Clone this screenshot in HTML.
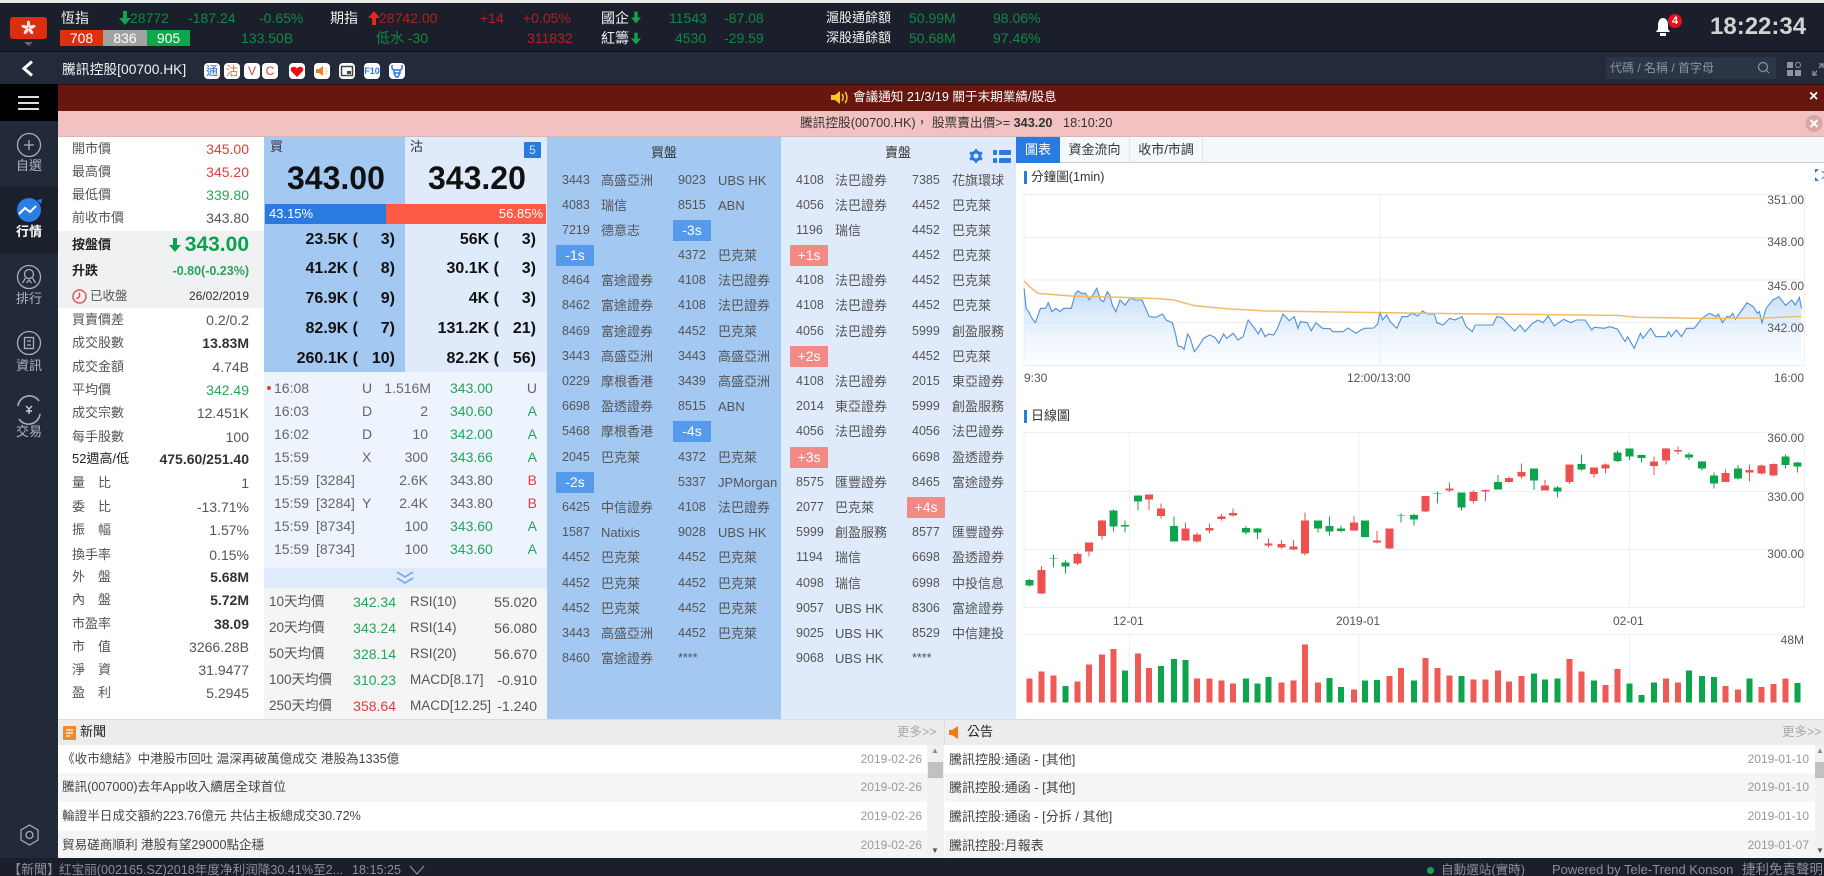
<!DOCTYPE html>
<html lang="zh-Hant"><head><meta charset="utf-8"><title>騰訊控股</title>
<style>
*{box-sizing:border-box;margin:0;padding:0}
html,body{width:1824px;height:876px;overflow:hidden;background:#fff}
body{position:relative;font-family:"Liberation Sans","Noto Sans CJK TC",sans-serif;font-size:13px;color:#555}
.b{position:absolute}
.t{position:absolute;white-space:nowrap;line-height:20px;height:20px}
.g{color:#0e8a43}.r{color:#b02020}.w{color:#f2f2f2}
.n{font-size:14px}
svg{position:absolute;overflow:visible}
.lr{position:absolute;left:58px;width:206px;height:22px;line-height:22px;padding:0 15px 0 14px;display:flex;justify-content:space-between;font-size:13px;color:#555;white-space:nowrap}
.lr b{font-weight:400;font-size:14px}
.lr .gn{color:#27a35c}.lr .rd{color:#e23c3c}
.lr .k{color:#222;font-weight:700}
.lr .s{color:#333;font-weight:700;font-size:14px}
.ic{position:absolute;top:63px;width:16px;height:16px;background:#fff;border-radius:4px;text-align:center;font-size:12px;line-height:16px;overflow:hidden}
.qr{position:absolute;height:20px;line-height:20px;font-weight:700;font-size:16px;color:#111;white-space:nowrap}
.tr{position:absolute;left:264px;width:283px;height:20px;line-height:20px;font-size:14px;color:#666;white-space:nowrap}
.tr i{position:absolute;font-style:normal}
.s1{left:10px}.s2{left:52px}.s3{left:98px}.s4{right:119px}.s5{left:186px;color:#27a35c}.s5.x{color:#666}.s6{right:10px;color:#27a35c}.s6.rd{color:#e23c3c}
.ma{position:absolute;left:264px;width:283px;height:20px;line-height:20px;font-size:13.5px;color:#555;white-space:nowrap}
.ma i{position:absolute;font-style:normal}
.bk{position:absolute;top:167.5px;width:234px;height:510px;font-size:12.5px;color:#555}
.br{position:relative;height:25.2px;line-height:25.2px;white-space:nowrap}
.br i{position:absolute;font-style:normal}
.c1{left:15px}.n1{left:54px;font-size:13px}.c2{left:131px}.n2{left:171px;font-size:13px}
.br em{position:absolute;font-style:normal;top:2px;height:21px;width:38px;line-height:20px;text-align:center;color:#fff;font-size:14px}
.eb{background:#569beb}.es{background:#f28a85}
.e1{left:9px}.e2{left:126px}
.tb{position:absolute;top:137px;height:26px;line-height:25px;text-align:center;font-size:13px;color:#333;border-right:1px solid #e2e5e9}
.lb{position:absolute;font-size:12px;color:#555;line-height:14px;height:14px;white-space:nowrap}
.nr{position:absolute;height:29px;line-height:29px;font-size:13px;color:#444;white-space:nowrap;overflow:hidden;padding-left:4px}
.nr.m{font-size:12.6px}
.nr span{position:absolute;top:0;font-size:12px;color:#999}
.sl{position:absolute;height:20px;line-height:20px;font-size:13px;color:#aeb4bf;text-align:center;width:58px;left:0}
</style></head><body>

<!-- top bar -->
<div class="b" style="left:0;top:0;width:1824px;height:3px;background:#e9e9e9"></div>
<div class="b" style="left:0;top:3px;width:1824px;height:49px;background:#1a1f2b;border-bottom:1px solid #0e1118"></div>
<div class="b" style="left:10px;top:17px;width:37px;height:22px;background:#d8300f;border-radius:3px"></div>
<svg style="left:10px;top:17px" width="37" height="32" viewBox="0 0 37 32"><g fill="#f5e9e4"><ellipse cx="18.5" cy="7" rx="1.7" ry="3.4"/><ellipse cx="18.5" cy="7" rx="1.7" ry="3.4" transform="rotate(72 18.5 11)"/><ellipse cx="18.5" cy="7" rx="1.7" ry="3.4" transform="rotate(144 18.5 11)"/><ellipse cx="18.5" cy="7" rx="1.7" ry="3.4" transform="rotate(216 18.5 11)"/><ellipse cx="18.5" cy="7" rx="1.7" ry="3.4" transform="rotate(288 18.5 11)"/></g><path d="M14 25h9l-4.500 4z" fill="#667"/></svg>

<div class="t w" style="left:61px;top:8px;font-size:14px">恆指</div>
<svg style="left:119px;top:11px" width="12" height="14" viewBox="0 0 12 14"><path d="M4 0h4v7h4l-6 7-6-7h4z" fill="#10a54a"/></svg>
<div class="t g n" style="left:130px;top:8px">28772</div>
<div class="t g n" style="left:188px;top:8px">-187.24</div>
<div class="t g n" style="left:259px;top:8px">-0.65%</div>
<div class="t w" style="left:330px;top:8px;font-size:14px">期指</div>
<svg style="left:368px;top:11px" width="12" height="14" viewBox="0 0 12 14"><path d="M4 14h4V7h4L6 0 0 7h4z" fill="#e5281e"/></svg>
<div class="t r n" style="left:379px;top:8px">28742.00</div>
<div class="t r n" style="left:480px;top:8px">+14</div>
<div class="t r n" style="left:523px;top:8px">+0.05%</div>
<div class="b" style="left:60px;top:30px;width:43px;height:16px;background:#df300e;color:#fff;font-size:14px;line-height:16px;text-align:center">708</div>
<div class="b" style="left:103px;top:30px;width:44px;height:16px;background:#a2a2a2;color:#fff;font-size:14px;line-height:16px;text-align:center">836</div>
<div class="b" style="left:147px;top:30px;width:43px;height:16px;background:#0ba84a;color:#fff;font-size:14px;line-height:16px;text-align:center">905</div>
<div class="t g n" style="left:241px;top:28px">133.50B</div>
<div class="t g n" style="left:376px;top:28px">低水 -30</div>
<div class="t r n" style="left:527px;top:28px">311832</div>
<div class="t w" style="left:601px;top:8px;font-size:14px">國企</div>
<div class="t w" style="left:601px;top:28px;font-size:14px">紅籌</div>
<svg style="left:631px;top:11px" width="10" height="13" viewBox="0 0 12 14"><path d="M4 0h4v7h4l-6 7-6-7h4z" fill="#10a54a"/></svg>
<svg style="left:631px;top:32px" width="10" height="13" viewBox="0 0 12 14"><path d="M4 0h4v7h4l-6 7-6-7h4z" fill="#10a54a"/></svg>
<div class="t g n" style="left:669px;top:8px">11543</div>
<div class="t g n" style="left:675px;top:28px">4530</div>
<div class="t g n" style="left:724px;top:8px">-87.08</div>
<div class="t g n" style="left:724px;top:28px">-29.59</div>
<div class="t w" style="left:826px;top:8px">滬股通餘額</div>
<div class="t w" style="left:826px;top:28px">深股通餘額</div>
<div class="t g n" style="left:909px;top:8px">50.99M</div>
<div class="t g n" style="left:909px;top:28px">50.68M</div>
<div class="t g n" style="left:993px;top:8px">98.06%</div>
<div class="t g n" style="left:993px;top:28px">97.46%</div>
<svg style="left:1654px;top:16px" width="20" height="22" viewBox="0 0 20 22"><path d="M9 2c-3 0-5 3-5 7v4l-2 3h14l-2-3V9c0-4-2-7-5-7z" fill="#fff"/><rect x="6" y="17" width="6" height="3" fill="#fff"/></svg>
<div class="b" style="left:1668px;top:14px;width:14px;height:14px;border-radius:50%;background:#e5101a;color:#fff;font-weight:700;font-size:11px;line-height:14px;text-align:center">4</div>
<div class="b" style="left:1710px;top:12px;width:104px;height:30px;line-height:30px;font-size:24px;font-weight:700;color:#d2d2d2;white-space:nowrap">18:22:34</div>

<!-- nav bar -->
<div class="b" style="left:0;top:52px;width:1824px;height:32px;background:#232b3a"></div>
<svg style="left:20px;top:60px" width="16" height="17" viewBox="0 0 16 17"><path d="M12 1.500 4 8.500l8 7" fill="none" stroke="#fff" stroke-width="3"/></svg>
<div class="t w" style="left:62px;top:60px;font-size:13.8px">騰訊控股[00700.HK]</div>
<div class="ic" style="left:204px;color:#2a7ae0">通</div>
<div class="ic" style="left:224px;color:#f0702a">沽</div>
<div class="ic" style="left:244px;color:#e23c3c">V</div>
<div class="ic" style="left:262px;color:#e23c3c">C</div>
<div class="ic" style="left:289px"></div>
<svg style="left:289px;top:63px" width="16" height="16" viewBox="0 0 16 16"><path d="M8 14 2.500 8.500C1 7 1.500 4 4.500 3.800 6 3.700 7.200 4.500 8 5.500 8.800 4.500 10 3.700 11.500 3.800 14.500 4 15 7 13.500 8.500z" fill="#e8101c"/></svg>
<div class="ic" style="left:314px"></div>
<svg style="left:314px;top:63px" width="16" height="16" viewBox="0 0 16 16"><path d="M2 6h3l4-3v10l-4-3H2z" fill="#f0802a"/><path d="M11 5l2 1M11 8h3M11 11l2-1" stroke="#f0c08a" stroke-width="1"/></svg>
<div class="ic" style="left:339px"></div>
<svg style="left:339px;top:63px" width="16" height="16" viewBox="0 0 16 16"><rect x="2.500" y="3.500" width="11" height="9" fill="none" stroke="#444" stroke-width="1.500"/><rect x="8" y="8" width="4" height="3" fill="#444"/></svg>
<div class="ic" style="left:364px;color:#2a7ae0;font-size:9px;font-weight:700">F10</div>
<div class="ic" style="left:389px"></div>
<svg style="left:389px;top:63px" width="16" height="16" viewBox="0 0 16 16"><path d="M3 2v3c0 1 1 2 2 2h6c1 0 2-1 2-2V2M5 7v3l2 4h2l2-4V7M5 10h6" fill="none" stroke="#2a7ae0" stroke-width="1.500"/></svg>
<div class="b" style="left:1606px;top:57px;width:170px;height:22px;background:#2c3545"></div>
<div class="t" style="left:1610px;top:58px;font-size:12px;color:#8a93a3">代碼 / 名稱 / 首字母</div>
<svg style="left:1757px;top:61px" width="14" height="14" viewBox="0 0 14 14"><circle cx="6" cy="6" r="4.500" fill="none" stroke="#8a93a3" stroke-width="1.200"/><path d="M9.500 9.500 12 12" stroke="#8a93a3" stroke-width="1.200"/></svg>
<svg style="left:1787px;top:62px" width="14" height="14" viewBox="0 0 14 14"><g fill="#8f96a3"><rect width="6" height="6"/><rect y="8" width="6" height="6"/><rect x="8" y="8" width="6" height="6"/><circle cx="11" cy="3" r="2.500" fill="none" stroke="#8f96a3"/></g></svg>
<svg style="left:1812px;top:63px" width="12" height="13" viewBox="0 0 12 13"><path d="M1 12l4-4M1 8v4h4M11 1 7 5M7 1h4v4" fill="none" stroke="#8f96a3" stroke-width="1.300"/></svg>

<!-- alert bars -->
<div class="b" style="left:58px;top:84px;width:1766px;height:27px;background:#671710;border-top:1px solid #3f0e0a"></div>
<svg style="left:830px;top:90px" width="20" height="15" viewBox="0 0 20 15"><path d="M1 5h4l5-4v13l-5-4H1z" fill="#f6c824"/><path d="M12 4c1.500 2 1.500 5 0 7M15 2c2.500 3 2.500 8 0 11" fill="none" stroke="#f6c824" stroke-width="1.500"/></svg>
<div class="t" style="left:853px;top:87px;font-size:12.6px;color:#fff">會議通知 21/3/19 關于末期業績/股息</div>
<div class="t" style="left:1809px;top:87px;font-size:16px;color:#fff;font-weight:700">×</div>
<div class="b" style="left:58px;top:111px;width:1766px;height:26px;background:#f2c2c2;border-bottom:1px solid #d5b8b8"></div>
<div class="t" style="left:800px;top:113px;font-size:12.7px;color:#333">騰訊控股(00700.HK)， 股票賣出價&gt;= <b>343.20</b>&nbsp;&nbsp;&nbsp;18:10:20</div>
<svg style="left:1805px;top:114px" width="19" height="19" viewBox="0 0 19 19"><circle cx="9" cy="9.500" r="8.500" fill="#d9a5a7"/><path d="M5.500 6 12.500 13M12.500 6 5.500 13" stroke="#fff" stroke-width="2"/></svg>

<!-- sidebar -->
<div class="b" style="left:0;top:84px;width:58px;height:774px;background:#222a3a"></div>
<div class="b" style="left:0;top:84px;width:58px;height:37px;background:#000"></div>
<div class="b" style="left:18px;top:96px;width:21px;height:2px;background:#ddd"></div>
<div class="b" style="left:18px;top:102px;width:21px;height:2px;background:#ddd"></div>
<div class="b" style="left:18px;top:108px;width:21px;height:2px;background:#ddd"></div>
<div class="b" style="left:0;top:187px;width:58px;height:66px;background:#1a202c"></div>
<svg style="left:0;top:130px" width="58" height="720" viewBox="0 0 58 720">
<g fill="none" stroke="#a9afba" stroke-width="1.300">
<circle cx="29" cy="15" r="11.500"/><path d="M29 10v10M24 15h10"/>
<circle cx="29" cy="147" r="11.500"/><circle cx="29" cy="144" r="4.500"/><path d="M25.500 148l-3 5M32.500 148l3 5M26.500 153l2.500-3 2.500 3"/>
<circle cx="29" cy="213" r="11.500"/><rect x="24.500" y="207.500" width="9" height="11"/><path d="M27 211h4M27 215h4"/>
<path d="M18 276a11.500 11.500 0 0 1 21-5M40 284a11.500 11.500 0 0 1-21 5" stroke-width="1.600"/><path d="M26 276l3 3 3-3M29 279v5M26 281h6" stroke="#ccd" stroke-width="1.400"/>
<path d="M29.500 695l8.500 5v10l-8.500 5-8.500-5v-10z" stroke-width="1.200"/><circle cx="29.500" cy="705" r="3.500"/>
</g>
<circle cx="29" cy="80" r="12" fill="#2a7de1"/><path d="M19 84l6-6 5 4 6-6" fill="none" stroke="#fff" stroke-width="2"/><path d="M37 70l5-1-1 5z" fill="#2a7de1"/>
</svg>
<div class="sl" style="top:156px">自選</div>
<div class="sl" style="top:222px;color:#fff;font-weight:700">行情</div>
<div class="sl" style="top:289px">排行</div>
<div class="sl" style="top:356px">資訊</div>
<div class="sl" style="top:422px">交易</div>

<!-- left stats -->
<div class="b" style="left:58px;top:137px;width:206px;height:582px;background:#fff"></div>
<div class="b" style="left:58px;top:231px;width:206px;height:77px;background:#f0f1f3"></div>
<div class="lr" style="top:138px"><span>開市價</span><b class="rd">345.00</b></div>
<div class="lr" style="top:161px"><span>最高價</span><b class="rd">345.20</b></div>
<div class="lr" style="top:184px"><span>最低價</span><b class="gn">339.80</b></div>
<div class="lr" style="top:207px"><span>前收市價</span><b>343.80</b></div>
<div class="lr" style="top:234px;line-height:22px"><span class="k">按盤價</span><b style="font-size:21px;font-weight:700;color:#0ca24d;padding-left:17px;position:relative"><svg style="left:0;top:4px" width="14" height="14" viewBox="0 0 12 14"><path d="M4 0h4v7h4l-6 7-6-7h4z" fill="#0ca24d"/></svg>343.00</b></div>
<div class="lr" style="top:260px"><span class="k">升跌</span><b style="font-size:12.500px;font-weight:700;color:#27a35c">-0.80(-0.23%)</b></div>
<svg style="left:72px;top:289px" width="15" height="15" viewBox="0 0 15 15"><circle cx="7.500" cy="7.500" r="6.500" fill="none" stroke="#e8505b" stroke-width="1.500"/><path d="M7.500 3.500v4L4.500 10" fill="none" stroke="#e8505b" stroke-width="1.500"/></svg>
<div class="lr" style="top:285px"><span style="padding-left:18px;font-size:12.500px">已收盤</span><b style="font-size:12px;color:#333">26/02/2019</b></div>
<div class="lr" style="top:309px"><span>買賣價差</span><b>0.2/0.2</b></div>
<div class="lr" style="top:332px"><span>成交股數</span><b class="s">13.83M</b></div>
<div class="lr" style="top:356px"><span>成交金額</span><b>4.74B</b></div>
<div class="lr" style="top:379px"><span>平均價</span><b class="gn">342.49</b></div>
<div class="lr" style="top:402px"><span>成交宗數</span><b>12.451K</b></div>
<div class="lr" style="top:426px"><span>每手股數</span><b>100</b></div>
<div class="lr" style="top:448px"><span style="color:#222">52週高/低</span><b class="s">475.60/251.40</b></div>
<div class="lr" style="top:472px"><span>量&emsp;比</span><b>1</b></div>
<div class="lr" style="top:496px"><span>委&emsp;比</span><b>-13.71%</b></div>
<div class="lr" style="top:519px"><span>振&emsp;幅</span><b>1.57%</b></div>
<div class="lr" style="top:544px"><span>換手率</span><b>0.15%</b></div>
<div class="lr" style="top:566px"><span>外&emsp;盤</span><b class="s">5.68M</b></div>
<div class="lr" style="top:589px"><span>內&emsp;盤</span><b class="s">5.72M</b></div>
<div class="lr" style="top:613px"><span>市盈率</span><b class="s">38.09</b></div>
<div class="lr" style="top:636px"><span>市&emsp;值</span><b>3266.28B</b></div>
<div class="lr" style="top:659px"><span>淨&emsp;資</span><b>31.9477</b></div>
<div class="lr" style="top:682px"><span>盈&emsp;利</span><b>5.2945</b></div>

<!-- quote panel -->
<div class="b" style="left:264px;top:137px;width:141px;height:235px;background:#a3c8f2"></div>
<div class="b" style="left:405px;top:137px;width:142px;height:235px;background:#dfeafa"></div>
<div class="t" style="left:270px;top:137px;color:#333">買</div>
<div class="t" style="left:410px;top:137px;color:#333">沽</div>
<div class="b" style="left:524px;top:142px;width:17px;height:16px;background:#2a7ae0;color:#cfe2fa;font-size:12px;line-height:16px;text-align:center;border-radius:1px">5</div>
<div class="t" style="left:287px;top:163px;height:30px;line-height:30px;font-size:32px;font-weight:700;color:#111">343.00</div>
<div class="t" style="left:428px;top:163px;height:30px;line-height:30px;font-size:32px;font-weight:700;color:#111">343.20</div>
<div class="b" style="left:265px;top:204px;width:121px;height:20px;background:#2a7be0;color:#fff;font-size:13px;line-height:20px;padding-left:4px">43.15%</div>
<div class="b" style="left:386px;top:204px;width:160px;height:20px;background:#fe5a45;color:#fff;font-size:13px;line-height:20px;padding-right:3px;text-align:right">56.85%</div>
<div class="qr" style="right:1466px;top:230px">23.5K (</div><div class="qr" style="right:1429px;top:230px">3)</div>
<div class="qr" style="right:1466px;top:259px">41.2K (</div><div class="qr" style="right:1429px;top:259px">8)</div>
<div class="qr" style="right:1466px;top:289px">76.9K (</div><div class="qr" style="right:1429px;top:289px">9)</div>
<div class="qr" style="right:1466px;top:319px">82.9K (</div><div class="qr" style="right:1429px;top:319px">7)</div>
<div class="qr" style="right:1466px;top:349px">260.1K (</div><div class="qr" style="right:1429px;top:349px">10)</div>
<div class="qr" style="right:1325px;top:230px">56K (</div><div class="qr" style="right:1288px;top:230px">3)</div>
<div class="qr" style="right:1325px;top:259px">30.1K (</div><div class="qr" style="right:1288px;top:259px">3)</div>
<div class="qr" style="right:1325px;top:289px">4K (</div><div class="qr" style="right:1288px;top:289px">3)</div>
<div class="qr" style="right:1325px;top:319px">131.2K (</div><div class="qr" style="right:1288px;top:319px">21)</div>
<div class="qr" style="right:1325px;top:349px">82.2K (</div><div class="qr" style="right:1288px;top:349px">56)</div>

<!-- trades -->
<div class="b" style="left:264px;top:372px;width:283px;height:196px;background:#edf4fd"></div>
<div class="b" style="left:264px;top:568px;width:283px;height:20px;background:#e0ecfb"></div>
<div class="b" style="left:267px;top:386px;width:4px;height:4px;border-radius:50%;background:#e23c3c"></div>
<div class="tr" style="top:378px"><i class="s1">16:08</i><i class="s3">U</i><i class="s4" style="right:116px">1.516M</i><i class="s5">343.00</i><i class="s6" style="color:#666">U</i></div>
<div class="tr" style="top:401px"><i class="s1">16:03</i><i class="s3">D</i><i class="s4">2</i><i class="s5">340.60</i><i class="s6">A</i></div>
<div class="tr" style="top:424px"><i class="s1">16:02</i><i class="s3">D</i><i class="s4">10</i><i class="s5">342.00</i><i class="s6">A</i></div>
<div class="tr" style="top:447px"><i class="s1">15:59</i><i class="s3">X</i><i class="s4">300</i><i class="s5">343.66</i><i class="s6">A</i></div>
<div class="tr" style="top:470px"><i class="s1">15:59</i><i class="s2">[3284]</i><i class="s4">2.6K</i><i class="s5 x">343.80</i><i class="s6 rd">B</i></div>
<div class="tr" style="top:493px"><i class="s1">15:59</i><i class="s2">[3284]</i><i class="s3">Y</i><i class="s4">2.4K</i><i class="s5 x">343.80</i><i class="s6 rd">B</i></div>
<div class="tr" style="top:516px"><i class="s1">15:59</i><i class="s2">[8734]</i><i class="s4">100</i><i class="s5">343.60</i><i class="s6">A</i></div>
<div class="tr" style="top:539px"><i class="s1">15:59</i><i class="s2">[8734]</i><i class="s4">100</i><i class="s5">343.60</i><i class="s6">A</i></div>
<svg style="left:396px;top:571px" width="18" height="14" viewBox="0 0 18 14"><path d="M1 1l8 5 8-5M1 7l8 5 8-5" fill="none" stroke="#7aa9ee" stroke-width="1.800"/></svg>

<!-- MA -->
<div class="b" style="left:264px;top:588px;width:283px;height:131px;background:#f5f5f5"></div>
<div class="ma" style="top:592px"><i style="left:5px">10天均價</i><i style="right:151px;color:#27a35c;font-size:14px">342.34</i><i style="left:146px">RSI(10)</i><i style="right:10px;font-size:14px">55.020</i></div>
<div class="ma" style="top:618px"><i style="left:5px">20天均價</i><i style="right:151px;color:#27a35c;font-size:14px">343.24</i><i style="left:146px">RSI(14)</i><i style="right:10px;font-size:14px">56.080</i></div>
<div class="ma" style="top:644px"><i style="left:5px">50天均價</i><i style="right:151px;color:#27a35c;font-size:14px">328.14</i><i style="left:146px">RSI(20)</i><i style="right:10px;font-size:14px">56.670</i></div>
<div class="ma" style="top:670px"><i style="left:5px">100天均價</i><i style="right:151px;color:#27a35c;font-size:14px">310.23</i><i style="left:146px">MACD[8.17]</i><i style="right:10px;font-size:14px">-0.910</i></div>
<div class="ma" style="top:696px"><i style="left:5px">250天均價</i><i style="right:151px;color:#e23c3c;font-size:14px">358.64</i><i style="left:146px">MACD[12.25]</i><i style="right:10px;font-size:14px">-1.240</i></div>

<!-- broker -->
<div class="b" style="left:547px;top:137px;width:234px;height:582px;background:#a3c8f2"></div>
<div class="b" style="left:781px;top:137px;width:235px;height:582px;background:#dfeafa"></div>
<div class="t" style="left:651px;top:143px;color:#333">買盤</div>
<div class="t" style="left:885px;top:143px;color:#333">賣盤</div>
<svg style="left:968px;top:148px" width="16" height="16" viewBox="0 0 16 16"><circle cx="8" cy="8" r="4" fill="none" stroke="#2a7ae0" stroke-width="3"/><path d="M8 1v3M8 12v3M1.900 4.500l2.600 1.500M11.500 10l2.600 1.500M1.900 11.500 4.500 10M11.500 6l2.600-1.500" stroke="#2a7ae0" stroke-width="2.500"/></svg>
<svg style="left:993px;top:150px" width="18" height="14" viewBox="0 0 18 14"><g fill="#2a7ae0"><rect width="4" height="5" rx="1"/><rect x="6" width="12" height="5" rx="1"/><rect y="8" width="4" height="5" rx="1"/><rect x="6" y="8" width="12" height="5" rx="1"/></g></svg>

<div class="bk" style="left:547px">
<div class="br"><i class="c1">3443</i><i class="n1">高盛亞洲</i><i class="c2">9023</i><i class="n2">UBS HK</i></div>
<div class="br"><i class="c1">4083</i><i class="n1">瑞信</i><i class="c2">8515</i><i class="n2">ABN</i></div>
<div class="br"><i class="c1">7219</i><i class="n1">德意志</i><em class="eb e2">-3s</em></div>
<div class="br"><em class="eb e1">-1s</em><i class="c2">4372</i><i class="n2">巴克萊</i></div>
<div class="br"><i class="c1">8464</i><i class="n1">富途證券</i><i class="c2">4108</i><i class="n2">法巴證券</i></div>
<div class="br"><i class="c1">8462</i><i class="n1">富途證券</i><i class="c2">4108</i><i class="n2">法巴證券</i></div>
<div class="br"><i class="c1">8469</i><i class="n1">富途證券</i><i class="c2">4452</i><i class="n2">巴克萊</i></div>
<div class="br"><i class="c1">3443</i><i class="n1">高盛亞洲</i><i class="c2">3443</i><i class="n2">高盛亞洲</i></div>
<div class="br"><i class="c1">0229</i><i class="n1">摩根香港</i><i class="c2">3439</i><i class="n2">高盛亞洲</i></div>
<div class="br"><i class="c1">6698</i><i class="n1">盈透證券</i><i class="c2">8515</i><i class="n2">ABN</i></div>
<div class="br"><i class="c1">5468</i><i class="n1">摩根香港</i><em class="eb e2">-4s</em></div>
<div class="br"><i class="c1">2045</i><i class="n1">巴克萊</i><i class="c2">4372</i><i class="n2">巴克萊</i></div>
<div class="br"><em class="eb e1">-2s</em><i class="c2">5337</i><i class="n2">JPMorgan</i></div>
<div class="br"><i class="c1">6425</i><i class="n1">中信證券</i><i class="c2">4108</i><i class="n2">法巴證券</i></div>
<div class="br"><i class="c1">1587</i><i class="n1">Natixis</i><i class="c2">9028</i><i class="n2">UBS HK</i></div>
<div class="br"><i class="c1">4452</i><i class="n1">巴克萊</i><i class="c2">4452</i><i class="n2">巴克萊</i></div>
<div class="br"><i class="c1">4452</i><i class="n1">巴克萊</i><i class="c2">4452</i><i class="n2">巴克萊</i></div>
<div class="br"><i class="c1">4452</i><i class="n1">巴克萊</i><i class="c2">4452</i><i class="n2">巴克萊</i></div>
<div class="br"><i class="c1">3443</i><i class="n1">高盛亞洲</i><i class="c2">4452</i><i class="n2">巴克萊</i></div>
<div class="br"><i class="c1">8460</i><i class="n1">富途證券</i><i class="c2">****</i></div>
</div>
<div class="bk" style="left:781px">
<div class="br"><i class="c1">4108</i><i class="n1">法巴證券</i><i class="c2">7385</i><i class="n2">花旗環球</i></div>
<div class="br"><i class="c1">4056</i><i class="n1">法巴證券</i><i class="c2">4452</i><i class="n2">巴克萊</i></div>
<div class="br"><i class="c1">1196</i><i class="n1">瑞信</i><i class="c2">4452</i><i class="n2">巴克萊</i></div>
<div class="br"><em class="es e1">+1s</em><i class="c2">4452</i><i class="n2">巴克萊</i></div>
<div class="br"><i class="c1">4108</i><i class="n1">法巴證券</i><i class="c2">4452</i><i class="n2">巴克萊</i></div>
<div class="br"><i class="c1">4108</i><i class="n1">法巴證券</i><i class="c2">4452</i><i class="n2">巴克萊</i></div>
<div class="br"><i class="c1">4056</i><i class="n1">法巴證券</i><i class="c2">5999</i><i class="n2">創盈服務</i></div>
<div class="br"><em class="es e1">+2s</em><i class="c2">4452</i><i class="n2">巴克萊</i></div>
<div class="br"><i class="c1">4108</i><i class="n1">法巴證券</i><i class="c2">2015</i><i class="n2">東亞證券</i></div>
<div class="br"><i class="c1">2014</i><i class="n1">東亞證券</i><i class="c2">5999</i><i class="n2">創盈服務</i></div>
<div class="br"><i class="c1">4056</i><i class="n1">法巴證券</i><i class="c2">4056</i><i class="n2">法巴證券</i></div>
<div class="br"><em class="es e1">+3s</em><i class="c2">6698</i><i class="n2">盈透證券</i></div>
<div class="br"><i class="c1">8575</i><i class="n1">匯豐證券</i><i class="c2">8465</i><i class="n2">富途證券</i></div>
<div class="br"><i class="c1">2077</i><i class="n1">巴克萊</i><em class="es e2">+4s</em></div>
<div class="br"><i class="c1">5999</i><i class="n1">創盈服務</i><i class="c2">8577</i><i class="n2">匯豐證券</i></div>
<div class="br"><i class="c1">1194</i><i class="n1">瑞信</i><i class="c2">6698</i><i class="n2">盈透證券</i></div>
<div class="br"><i class="c1">4098</i><i class="n1">瑞信</i><i class="c2">6998</i><i class="n2">中投信息</i></div>
<div class="br"><i class="c1">9057</i><i class="n1">UBS HK</i><i class="c2">8306</i><i class="n2">富途證券</i></div>
<div class="br"><i class="c1">9025</i><i class="n1">UBS HK</i><i class="c2">8529</i><i class="n2">中信建投</i></div>
<div class="br"><i class="c1">9068</i><i class="n1">UBS HK</i><i class="c2">****</i></div>
</div>

<!-- right charts -->
<div class="b" style="left:1016px;top:137px;width:808px;height:26px;background:#f5f8fb;border-bottom:1px solid #c9ccd0"></div>
<div class="tb" style="left:1016px;width:44px;background:#2a7be0;color:#fff;border:0">圖表</div>
<div class="tb" style="left:1060px;width:70px">資金流向</div>
<div class="tb" style="left:1130px;width:73px">收市/市調</div>
<div class="b" style="left:1024px;top:171px;width:3px;height:13px;background:#2a7be0"></div>
<div class="t" style="left:1031px;top:167px;color:#333;font-size:12.6px">分鐘圖(1min)</div>
<svg style="left:1814px;top:168px" width="10" height="14" viewBox="0 0 10 14"><path d="M1 1h4L1 5zM1 13h4L1 9z" fill="#2a7be0"/><path d="M8 3l2 2M8 11l2-2" stroke="#2a7be0"/></svg>

<svg style="left:1020px;top:130px" width="804" height="270" viewBox="0 0 1568 810" preserveAspectRatio="none">
<defs><linearGradient id="fa" x1="0" y1="475" x2="0" y2="706" gradientUnits="userSpaceOnUse"><stop offset="0" stop-color="#8fbdf0" stop-opacity=".55"/><stop offset="1" stop-color="#d9e9fb" stop-opacity=".1"/></linearGradient></defs>
<g stroke="#eceff3" stroke-width="1" vector-effect="non-scaling-stroke" fill="none" shape-rendering="crispEdges">
<path vector-effect="non-scaling-stroke" d="M8 193H1530V706H8zM8 322H1530M8 450H1530M8 578H1530M702 193V706"/>
</g>
<path fill="url(#fa)" d="M8 475L12 535L18 548L22 562L30 578L40 535L50 535L55 518L62 545L70 535L78 545L85 535L100 535L108 490L113 483L120 490L128 490L135 510L142 495L150 475L157 510L163 515L170 485L175 495L180 525L187 545L195 510L205 525L215 503L225 510L238 510L245 535L252 560L265 562L278 552L285 570L297 578L303 610L308 648L315 650L320 658L327 612L332 625L340 665L350 645L358 625L370 615L380 622L388 640L397 612L403 625L416 610L425 630L435 620L445 570L455 590L465 612L470 595L478 620L485 612L495 615L502 595L513 552L525 572L535 560L542 595L547 575L560 578L568 602L577 578L590 595L605 596L610 605L630 605L640 594L655 610L665 600L672 595L690 594L698 580L702 545L707 570L715 555L722 575L735 595L745 560L755 560L765 550L775 558L785 543L795 552L808 552L813 578L825 585L838 565L848 570L862 560L870 590L882 605L888 585L922 585L930 560L940 563L950 580L965 603L975 585L985 605L998 582L1010 570L1020 578L1030 558L1042 588L1060 568L1075 578L1085 570L1102 570L1115 600L1120 592L1140 595L1150 590L1165 597L1180 635L1185 620L1198 655L1210 610L1215 625L1230 595L1240 620L1260 620L1265 605L1270 620L1280 600L1290 620L1300 595L1315 595L1330 565L1345 550L1358 560L1362 552L1370 578L1378 560L1385 560L1390 550L1395 568L1418 518L1430 530L1438 550L1442 545L1447 578L1455 535L1468 510L1480 500L1493 526L1505 510L1512 525L1520 502L1524 535L1524 706L8 706Z"/>
<path fill="none" stroke="#4f8fd8" stroke-width="1.100" vector-effect="non-scaling-stroke" d="M8 475L12 535L18 548L22 562L30 578L40 535L50 535L55 518L62 545L70 535L78 545L85 535L100 535L108 490L113 483L120 490L128 490L135 510L142 495L150 475L157 510L163 515L170 485L175 495L180 525L187 545L195 510L205 525L215 503L225 510L238 510L245 535L252 560L265 562L278 552L285 570L297 578L303 610L308 648L315 650L320 658L327 612L332 625L340 665L350 645L358 625L370 615L380 622L388 640L397 612L403 625L416 610L425 630L435 620L445 570L455 590L465 612L470 595L478 620L485 612L495 615L502 595L513 552L525 572L535 560L542 595L547 575L560 578L568 602L577 578L590 595L605 596L610 605L630 605L640 594L655 610L665 600L672 595L690 594L698 580L702 545L707 570L715 555L722 575L735 595L745 560L755 560L765 550L775 558L785 543L795 552L808 552L813 578L825 585L838 565L848 570L862 560L870 590L882 605L888 585L922 585L930 560L940 563L950 580L965 603L975 585L985 605L998 582L1010 570L1020 578L1030 558L1042 588L1060 568L1075 578L1085 570L1102 570L1115 600L1120 592L1140 595L1150 590L1165 597L1180 635L1185 620L1198 655L1210 610L1215 625L1230 595L1240 620L1260 620L1265 605L1270 620L1280 600L1290 620L1300 595L1315 595L1330 565L1345 550L1358 560L1362 552L1370 578L1378 560L1385 560L1390 550L1395 568L1418 518L1430 530L1438 550L1442 545L1447 578L1455 535L1468 510L1480 500L1493 526L1505 510L1512 525L1520 502L1524 535"/>
<path fill="none" stroke="#f2bb66" stroke-width="1.500" vector-effect="non-scaling-stroke" d="M8 453L20 472L35 490L100 498L200 502L270 506L300 510L340 527L400 536L480 543L700 548L900 552L1165 556L1205 562L1330 565L1450 564L1524 559"/>
</svg>
<div class="lb" style="right:20px;top:193px">351.00</div>
<div class="lb" style="right:20px;top:235px">348.00</div>
<div class="lb" style="right:20px;top:279px">345.00</div>
<div class="lb" style="right:20px;top:321px">342.00</div>
<div class="lb" style="left:1024px;top:371px">9:30</div>
<div class="lb" style="left:1347px;top:371px">12:00/13:00</div>
<div class="lb" style="right:20px;top:371px">16:00</div>

<div class="b" style="left:1024px;top:410px;width:3px;height:13px;background:#2a7be0"></div>
<div class="t" style="left:1031px;top:406px;color:#333">日線圖</div>

<svg style="left:1020px;top:400px" width="804" height="320" viewBox="0 0 1568 960" preserveAspectRatio="none">
<path fill="none" stroke="#eef1f4" vector-effect="non-scaling-stroke" shape-rendering="crispEdges" d="M8 98H1530V622H8zM8 275H1530M8 448H1530M214 98V622M661 98V622M1189 98V622M8 704H1530M214 704V907M661 704V907M1189 704V907"/>
<g fill="none" shape-rendering="crispEdges">
<path stroke="#ee4f4f" stroke-width="1" vector-effect="non-scaling-stroke" d="M42 498V582M112 458V495M135 427V470M160 360V418M252 283V330M275 310V356M323 368V423M345 397V427M370 370V400M393 342V362M415 325V350M485 415V443M510 420V445M533 420V450M556 338V467M651 348V393M696 393V430M721 385V447M791 288V336M838 247V276M884 272V310M908 268V303M954 230V248M978 190V236M1024 240V272M1072 193V252M1119 202V232M1142 190V220M1236 170V225M1260 144V194M1283 140V163M1376 208V246M1423 193V245M1446 194V224M1470 191V228"/>
<path stroke="#ee4f4f" stroke-width="8" vector-effect="non-scaling-stroke" d="M42 510V581M112 462V490M135 427V455M160 361V408M252 283V298M275 326V348M323 386V422M345 403V425M370 384V392M393 350V357M415 339V347M485 431V436M510 432V442M533 440V449M556 361V461M651 367V392M696 421V427M721 385V446M791 288V335M838 266V271M884 276V303M908 270V275M954 234V246M978 216V229M1024 256V271M1072 194V246M1119 203V222M1142 193V206M1236 184V198M1260 145V182M1283 150V155M1376 219V246M1423 210V217M1446 197V221M1470 192V227"/>
<path stroke="#0ca54b" stroke-width="1" vector-effect="non-scaling-stroke" d="M19 537V560M65 463V503M89 481V520M182 328V395M205 362V398M230 286V332M300 350V425M441 378V403M463 384V417M581 361V398M604 350V407M626 376V398M673 361V412M743 340V368M768 341V377M814 275V311M861 277V331M932 225V269M1002 205V270M1048 258V293M1095 163V212M1165 152V186M1189 145V180M1212 163V187M1305 158V180M1330 183V212M1353 217V266M1400 195V238M1493 164V205M1516 186V217"/>
<path stroke="#0ca54b" stroke-width="8" vector-effect="non-scaling-stroke" d="M19 540V556M65 475V477M89 488V500M182 332V380M205 375V380M230 286V305M300 378V425M441 384V398M463 386V398M581 361V386M604 378V395M626 386V393M673 361V411M743 346V348M768 345V359M814 280V282M861 277V323M932 246V268M1002 205V241M1048 262V274M1095 192V209M1165 158V183M1189 145V170M1212 165V174M1305 163V172M1330 184V206M1353 226V251M1400 205V236M1493 170V195M1516 187V200"/>
<path stroke="#ee5a55" stroke-width="6" vector-effect="non-scaling-stroke" d="M19 836V907M42 815V907M65 826V907M112 844V907M135 793V907M160 763V907M182 747V907M230 761V907M252 804V907M345 836V907M370 836V907M393 842V907M415 850V907M510 847V907M533 842V907M556 733V907M581 847V907M651 869V907M721 828V907M743 804V907M791 774V907M814 804V907M838 826V907M884 838V907M908 839V907M932 812V907M954 845V907M978 828V907M1072 777V907M1095 815V907M1142 855V907M1165 807V907M1260 836V907M1283 847V907M1376 858V907M1400 869V907M1446 861V907M1470 852V907M1493 836V907"/>
<path stroke="#0ca54b" stroke-width="6" vector-effect="non-scaling-stroke" d="M89 858V907M205 812V907M275 798V907M300 777V907M323 780V907M441 836V907M463 850V907M485 831V907M604 834V907M626 861V907M673 842V907M696 840V907M768 842V907M861 828V907M1002 820V907M1024 839V907M1048 836V907M1119 842V907M1189 850V907M1212 885V907M1236 847V907M1305 812V907M1330 828V907M1353 831V907M1423 836V907M1516 849V907"/>
</g>
</svg>
<div class="lb" style="right:20px;top:431px">360.00</div>
<div class="lb" style="right:20px;top:490px">330.00</div>
<div class="lb" style="right:20px;top:547px">300.00</div>
<div class="lb" style="left:1113px;top:614px">12-01</div>
<div class="lb" style="left:1336px;top:614px">2019-01</div>
<div class="lb" style="left:1613px;top:614px">02-01</div>
<div class="lb" style="right:20px;top:633px">48M</div>

<!-- news -->
<div class="b" style="left:58px;top:719px;width:1766px;height:26px;background:#ececec;border-top:1px solid #ddd"></div>
<div class="b" style="left:944px;top:719px;width:1px;height:26px;background:#ddd"></div>
<svg style="left:63px;top:726px" width="13" height="14" viewBox="0 0 13 14"><rect width="13" height="14" rx="1" fill="#f08a2a"/><path d="M3 4h7M3 7h7M3 10h4" stroke="#fff" stroke-width="1.200"/></svg>
<div class="t" style="left:80px;top:722px;color:#222">新聞</div>
<div class="t" style="left:897px;top:722px;color:#aaa;font-size:12.500px">更多&gt;&gt;</div>
<svg style="left:948px;top:725px" width="12" height="15" viewBox="0 0 12 15"><path d="M1 5h3l6-4v13l-6-4H1z" fill="#f07a1a"/></svg>
<div class="t" style="left:967px;top:722px;color:#222">公告</div>
<div class="t" style="left:1782px;top:722px;color:#aaa;font-size:12.500px">更多&gt;&gt;</div>

<div class="nr m" style="left:58px;top:745px;width:869px;background:#fff">《收市總結》中港股市回吐 滬深再破萬億成交 港股為1335億<span style="right:5px">2019-02-26</span></div>
<div class="nr m" style="left:58px;top:773px;width:869px;background:#f5f5f5">騰訊(007000)去年App收入續居全球首位<span style="right:5px">2019-02-26</span></div>
<div class="nr m" style="left:58px;top:802px;width:869px;background:#fff">輪證半日成交額約223.76億元 共佔主板總成交30.72%<span style="right:5px">2019-02-26</span></div>
<div class="nr m" style="left:58px;top:831px;width:869px;height:27px;background:#f5f5f5">貿易磋商順利 港股有望29000點企穩<span style="right:5px">2019-02-26</span></div>
<div class="b" style="left:927px;top:745px;width:17px;height:113px;background:#f1f1f1"></div>
<div class="b" style="left:928px;top:762px;width:15px;height:16px;background:#c1c1c1"></div>
<div class="t" style="left:931px;top:741px;font-size:8px;color:#888">▲</div>
<div class="t" style="left:931px;top:841px;font-size:8px;color:#555">▼</div>

<div class="nr" style="left:945px;top:745px;width:870px;background:#fff">騰訊控股:通函 - [其他]<span style="right:6px">2019-01-10</span></div>
<div class="nr" style="left:945px;top:773px;width:870px;background:#f5f5f5">騰訊控股:通函 - [其他]<span style="right:6px">2019-01-10</span></div>
<div class="nr" style="left:945px;top:802px;width:870px;background:#fff">騰訊控股:通函 - [分拆 / 其他]<span style="right:6px">2019-01-10</span></div>
<div class="nr" style="left:945px;top:831px;width:870px;height:27px;background:#f5f5f5">騰訊控股:月報表<span style="right:6px">2019-01-07</span></div>
<div class="b" style="left:1815px;top:745px;width:9px;height:113px;background:#f1f1f1"></div>
<div class="b" style="left:1815px;top:762px;width:9px;height:16px;background:#c1c1c1"></div>
<div class="t" style="left:1816px;top:741px;font-size:8px;color:#888">▲</div>
<div class="t" style="left:1816px;top:841px;font-size:8px;color:#555">▼</div>

<!-- bottom bar -->
<div class="b" style="left:0;top:858px;width:1824px;height:18px;background:#1a1f2b;overflow:hidden">
<div class="t" style="left:8px;top:2px;font-size:13px;color:#8a8f99">【新聞】</div>
<div class="t" style="left:59px;top:2px;font-size:12.6px;color:#8a8f99">红宝丽(002165.SZ)2018年度净利润降30.41%至2...</div>
<div class="t" style="left:352px;top:2px;font-size:12.6px;color:#8a8f99">18:15:25</div>
<svg style="left:409px;top:7px" width="16" height="10" viewBox="0 0 16 10"><path d="M1 1l7 8 7-8" fill="none" stroke="#8a8f99" stroke-width="1.200"/></svg>
<div class="b" style="left:1427px;top:9px;width:7px;height:7px;border-radius:50%;background:#12a550"></div>
<div class="t" style="left:1441px;top:2px;font-size:12.6px;color:#8a8f99">自動選站(實時)</div>
<div class="t" style="left:1552px;top:2px;font-size:13px;color:#8a8f99">Powered by Tele-Trend Konson</div>
<div class="t" style="left:1742px;top:2px;font-size:13.500px;color:#8a8f99">捷利免責聲明</div>
</div>
</body></html>
